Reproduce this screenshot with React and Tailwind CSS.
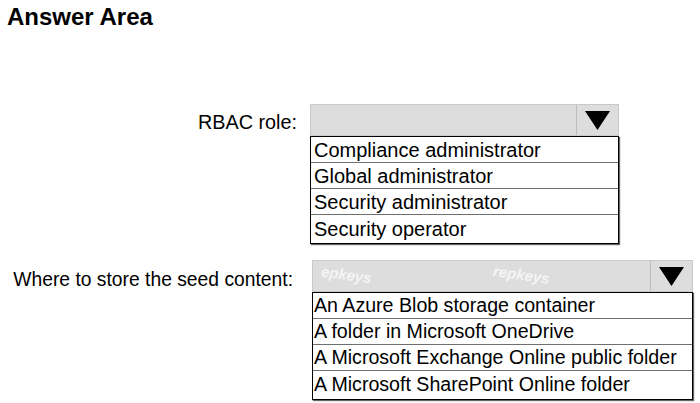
import React from "react";

const ROLE_OPTIONS = [
  "Compliance administrator",
  "Global administrator",
  "Security administrator",
  "Security operator",
];

const STORE_OPTIONS = [
  "An Azure Blob storage container",
  "A folder in Microsoft OneDrive",
  "A Microsoft Exchange Online public folder",
  "A Microsoft SharePoint Online folder",
];

function Arrow() {
  return (
    <svg width="25" height="19" viewBox="0 0 25 19">
      <polygon points="0,0 25,0 12.5,19" fill="#000" />
    </svg>
  );
}

function Dropdown({ width, options, textClass, padClass, watermark }) {
  return (
    <div className="flex flex-col" style={{ width }}>
      <div className="relative flex h-[32px] border border-[#c9c9c9] bg-[#dddddd] overflow-hidden">
        <div className="flex-1" />
        <div className="flex w-[42px] items-center justify-center border-l border-[#bdbdbd]">
          <Arrow />
        </div>
        {watermark && (
          <>
            <span className="absolute left-[8px] top-[6px] rotate-[8deg] text-[15px] font-bold italic leading-none text-white/70">
              epkeys
            </span>
            <span className="absolute left-[180px] top-[6px] rotate-[8deg] text-[15px] font-bold italic leading-none text-white/70">
              repkeys
            </span>
          </>
        )}
      </div>
      <div className="flex flex-col border border-black bg-white shadow-[1px_1px_1px_#666]">
        {options.map((o, i) => (
          <div
            key={o}
            className={
              "flex items-center leading-none text-black " +
              textClass +
              " " +
              padClass +
              " " +
              (i < options.length - 1 ? "h-[26px] border-b border-[#6f6f6f]" : "h-[28px]")
            }
          >
            {o}
          </div>
        ))}
      </div>
    </div>
  );
}

export default function App() {
  return (
    <div
      className="flex h-[403px] w-[700px] flex-col overflow-hidden bg-white text-black"
      style={{ fontFamily: '"Liberation Sans", Arial, sans-serif' }}
    >
      <h1 className="ml-[7px] mt-[2px] text-[24px] font-bold leading-[30px]">Answer Area</h1>

      <div className="mt-[72px] flex items-start">
        <div className="w-[297px] pt-[9px] text-right text-[19.8px] leading-none">RBAC role:</div>
        <div className="ml-[13px]">
          <Dropdown width={309} options={ROLE_OPTIONS} textClass="text-[20px]" padClass="px-[3px]" />
        </div>
      </div>

      <div className="mt-[16px] flex items-start">
        <div className="w-[293px] pt-[10px] text-right text-[19.3px] leading-none">
          Where to store the seed content:
        </div>
        <div className="ml-[19px]">
          <Dropdown
            width={381}
            options={STORE_OPTIONS}
            textClass="text-[19.6px]"
            padClass="px-[1px]"
            watermark
          />
        </div>
      </div>
    </div>
  );
}
